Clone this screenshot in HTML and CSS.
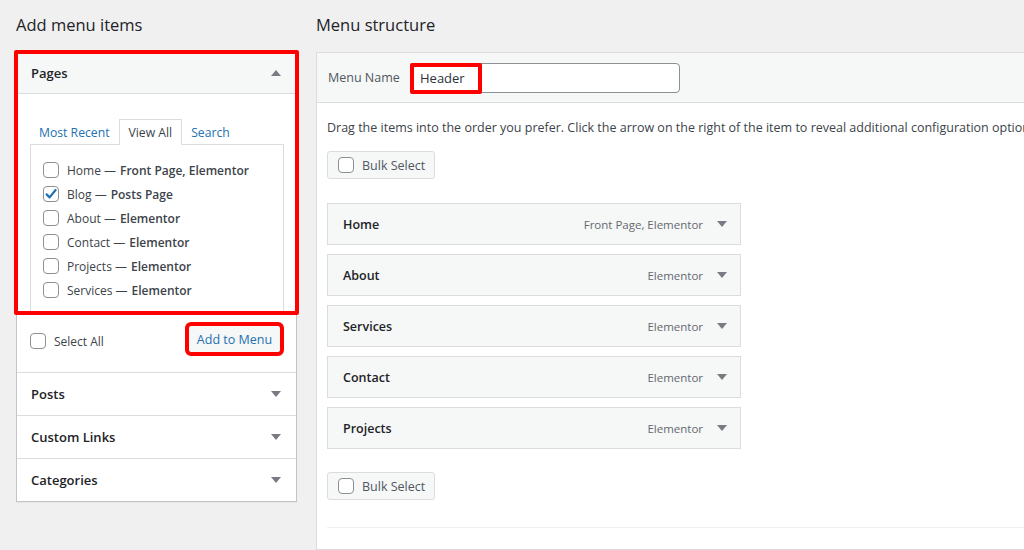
FILE: index.html
```html
<!DOCTYPE html>
<html lang="en">
<head>
    <meta charset="UTF-8">
    <meta name="viewport" content="width=device-width, initial-scale=1.0">
    <title>Menus</title>
    <link rel="stylesheet" href="styles.css">
</head>
<body>
    <div class="menus-wrap">
        <!-- Left column: add items -->
        <div class="col-left">
            <h2>Add menu items</h2>
            <div class="accordion">
                <div class="acc-section open">
                    <div class="mark mark-pages"></div>
                    <div class="acc-title">
                        <span>Pages</span>
                        <svg class="arrow" width="10" height="6" viewBox="0 0 10 6"><path d="M0 6 L5 0 L10 6 Z"/></svg>
                    </div>
                    <div class="acc-content">
                        <div class="tabs">
                            <a class="tab">Most Recent</a>
                            <a class="tab active">View All</a>
                            <a class="tab">Search</a>
                        </div>
                        <div class="tab-panel">
                            <label class="check-row"><span class="cb"></span>Home — <b>Front Page, Elementor</b></label>
                            <label class="check-row"><span class="cb"><svg width="14" height="14" viewBox="0 0 14 14"><path d="M2.6 7.4 L5.6 10.4 L11.6 3" fill="none" stroke="#2271b1" stroke-width="2.2" stroke-linecap="round" stroke-linejoin="round"/></svg></span>Blog — <b>Posts Page</b></label>
                            <label class="check-row"><span class="cb"></span>About — <b>Elementor</b></label>
                            <label class="check-row"><span class="cb"></span>Contact — <b>Elementor</b></label>
                            <label class="check-row"><span class="cb"></span>Projects — <b>Elementor</b></label>
                            <label class="check-row"><span class="cb"></span>Services — <b>Elementor</b></label>
                        </div>
                    </div>
                    <div class="button-controls">
                        <label class="check-row select-all"><span class="cb"></span>Select All</label>
                        <button class="btn add-btn">Add to Menu</button>
                    </div>
                </div>
                <div class="acc-section">
                    <div class="acc-title">
                        <span>Posts</span>
                        <svg class="arrow" width="10" height="6" viewBox="0 0 10 6"><path d="M0 0 L5 6 L10 0 Z"/></svg>
                    </div>
                </div>
                <div class="acc-section">
                    <div class="acc-title">
                        <span>Custom Links</span>
                        <svg class="arrow" width="10" height="6" viewBox="0 0 10 6"><path d="M0 0 L5 6 L10 0 Z"/></svg>
                    </div>
                </div>
                <div class="acc-section">
                    <div class="acc-title">
                        <span>Categories</span>
                        <svg class="arrow" width="10" height="6" viewBox="0 0 10 6"><path d="M0 0 L5 6 L10 0 Z"/></svg>
                    </div>
                </div>
            </div>
        </div>

        <!-- Right column: menu structure -->
        <div class="col-right">
            <h2>Menu structure</h2>
            <div class="menu-edit">
                <div class="menu-header">
                    <label class="name-label">Menu Name</label>
                    <div class="name-field">
                        <input type="text" value="Header">
                        <div class="mark mark-name"></div>
                    </div>
                </div>
                <div class="menu-body">
                    <p class="drag-help">Drag the items into the order you prefer. Click the arrow on the right of the item to reveal additional configuration options.</p>
                    <div class="btn bulk"><span class="cb"></span>Bulk Select</div>

                    <ul class="menu-items">
                        <li class="menu-item"><span class="item-title">Home</span><span class="item-meta">Front Page, Elementor</span><svg class="arrow" width="10" height="6" viewBox="0 0 10 6"><path d="M0 0 L5 6 L10 0 Z"/></svg></li>
                        <li class="menu-item"><span class="item-title">About</span><span class="item-meta">Elementor</span><svg class="arrow" width="10" height="6" viewBox="0 0 10 6"><path d="M0 0 L5 6 L10 0 Z"/></svg></li>
                        <li class="menu-item"><span class="item-title">Services</span><span class="item-meta">Elementor</span><svg class="arrow" width="10" height="6" viewBox="0 0 10 6"><path d="M0 0 L5 6 L10 0 Z"/></svg></li>
                        <li class="menu-item"><span class="item-title">Contact</span><span class="item-meta">Elementor</span><svg class="arrow" width="10" height="6" viewBox="0 0 10 6"><path d="M0 0 L5 6 L10 0 Z"/></svg></li>
                        <li class="menu-item"><span class="item-title">Projects</span><span class="item-meta">Elementor</span><svg class="arrow" width="10" height="6" viewBox="0 0 10 6"><path d="M0 0 L5 6 L10 0 Z"/></svg></li>
                    </ul>

                    <div class="btn bulk bulk-bottom"><span class="cb"></span>Bulk Select</div>
                    <div class="body-rule"></div>
                </div>
            </div>
        </div>
    </div>
</body>
</html>
```

FILE: styles.css
```css
body {
    margin: 0;
    background-color: #f0f0f1;
    font-family: "Open Sans", "Noto Sans", sans-serif;
    font-size: 12px;
    color: #3c434a;
    overflow: hidden;
}
.menus-wrap {
    display: flex;
    gap: 19px;
    padding-left: 16px;
}
h2 {
    margin: 0;
    padding-top: 13px;
    height: 24px;
    line-height: 24px;
    margin-bottom: 15px;
    font-size: 16.5px;
    font-weight: 500;
    color: #1d2327;
}
.col-left {
    width: 281px;
    flex-shrink: 0;
}
.col-right {
    width: 740px;
    flex-shrink: 0;
}

/* accordion */
.accordion {
    background-color: white;
    border: 1px solid #c3c4c7;
    box-shadow: 0 1px 1px rgba(0,0,0,0.04);
}
.acc-section {
    position: relative;
    border-bottom: 1px solid #dcdcde;
}
.acc-section:last-child {
    border-bottom: none;
}
.acc-title {
    display: flex;
    justify-content: space-between;
    align-items: center;
    height: 42px;
    padding: 0 14px;
    font-size: 13px;
    font-weight: 600;
    color: #1d2327;
}
.open .acc-title {
    height: 40px;
    background-color: #f6f7f7;
    border-bottom: 1px solid #dcdcde;
}
.arrow {
    fill: #787c82;
    margin-right: 1px;
}
.acc-content {
    padding: 25px 12px 0 13px;
}
.tabs {
    display: flex;
    height: 26px;
    margin-bottom: -1px;
}
.tab {
    padding: 0 9px 0 8px;
    line-height: 26px;
    font-size: 12.2px;
    color: #2271b1;
    border: 1px solid transparent;
    border-bottom: none;
}
.tab.active {
    color: #3c434a;
    background-color: white;
    border-color: #dcdcde;
    position: relative;
}
.tab-panel {
    height: 168px;
    box-sizing: border-box;
    border: 1px solid #dcdcde;
    padding: 13px 12px 0;
}
.check-row {
    display: flex;
    align-items: center;
    height: 24px;
    white-space: nowrap;
    font-size: 12px;
}
.check-row b {
    font-weight: 600;
    margin-left: 4px;
}
.cb {
    width: 16px;
    height: 16px;
    box-sizing: border-box;
    border: 1px solid #8c8f94;
    border-radius: 4px;
    background-color: white;
    display: inline-flex;
    align-items: center;
    justify-content: center;
    margin-right: 8px;
    flex-shrink: 0;
}
.button-controls {
    display: flex;
    justify-content: space-between;
    align-items: center;
    padding: 13px 15px 19px 13px;
}
.select-all {
    margin-top: 4px;
}
.btn {
    font-family: inherit;
    font-size: 12.5px;
    height: 28px;
    box-sizing: border-box;
    background-color: #f6f7f7;
    border: 1px solid #dcdcde;
    border-radius: 3px;
}
.add-btn {
    width: 93px;
    color: #2271b1;
    border-color: #c5d9ed;
    outline: 4px solid #f00;
    outline-offset: -1px;
}

/* red annotation boxes */
.mark {
    position: absolute;
    border: 4px solid #f00;
    border-radius: 2px;
    box-sizing: border-box;
    pointer-events: none;
    z-index: 2;
}
.mark-pages {
    top: -3px;
    left: -3px;
    width: 285px;
    height: 265px;
}
.mark-name {
    top: 0;
    left: -1px;
    width: 72px;
    height: 31px;
}

/* menu structure */
.menu-edit {
    background-color: white;
    border: 1px solid #dcdcde;
    height: 498px;
    box-sizing: border-box;
}
.menu-header {
    display: flex;
    align-items: center;
    height: 50px;
    box-sizing: border-box;
    padding: 0 11px;
    background-color: #f6f7f7;
    border-bottom: 1px solid #dcdcde;
}
.name-label {
    width: 83px;
    color: #50575e;
    font-size: 12.5px;
}
.name-field {
    position: relative;
}
.name-field input {
    display: block;
    width: 269px;
    height: 30px;
    box-sizing: border-box;
    border: 1px solid #8c8f94;
    border-radius: 4px;
    padding: 0 8px;
    font-family: inherit;
    font-size: 13px;
    color: #2c3338;
}
.menu-body {
    padding: 0 10px;
}
.drag-help {
    margin: 15px 0 13px;
    line-height: 20px;
    white-space: nowrap;
    font-size: 12.5px;
    color: #3c434a;
}
.bulk {
    display: inline-flex;
    align-items: center;
    width: 108px;
    padding-left: 10px;
    color: #50575e;
}
.menu-items {
    list-style: none;
    margin: 24px 0 0;
    padding: 0;
    width: 414px;
}
.menu-item {
    display: flex;
    align-items: center;
    height: 42px;
    box-sizing: border-box;
    margin-bottom: 9px;
    padding: 0 12px 0 15px;
    background-color: #f6f7f7;
    border: 1px solid #dcdcde;
}
.item-title {
    flex: 1;
    font-size: 12.5px;
    font-weight: 600;
    color: #1d2327;
}
.item-meta {
    font-size: 11.5px;
    color: #646970;
    margin-right: 14px;
}
.bulk-bottom {
    display: flex;
    margin-top: 23px;
}
.body-rule {
    margin-top: 27px;
    border-top: 1px solid #f0f0f1;
    margin-right: -10px;
}
```
